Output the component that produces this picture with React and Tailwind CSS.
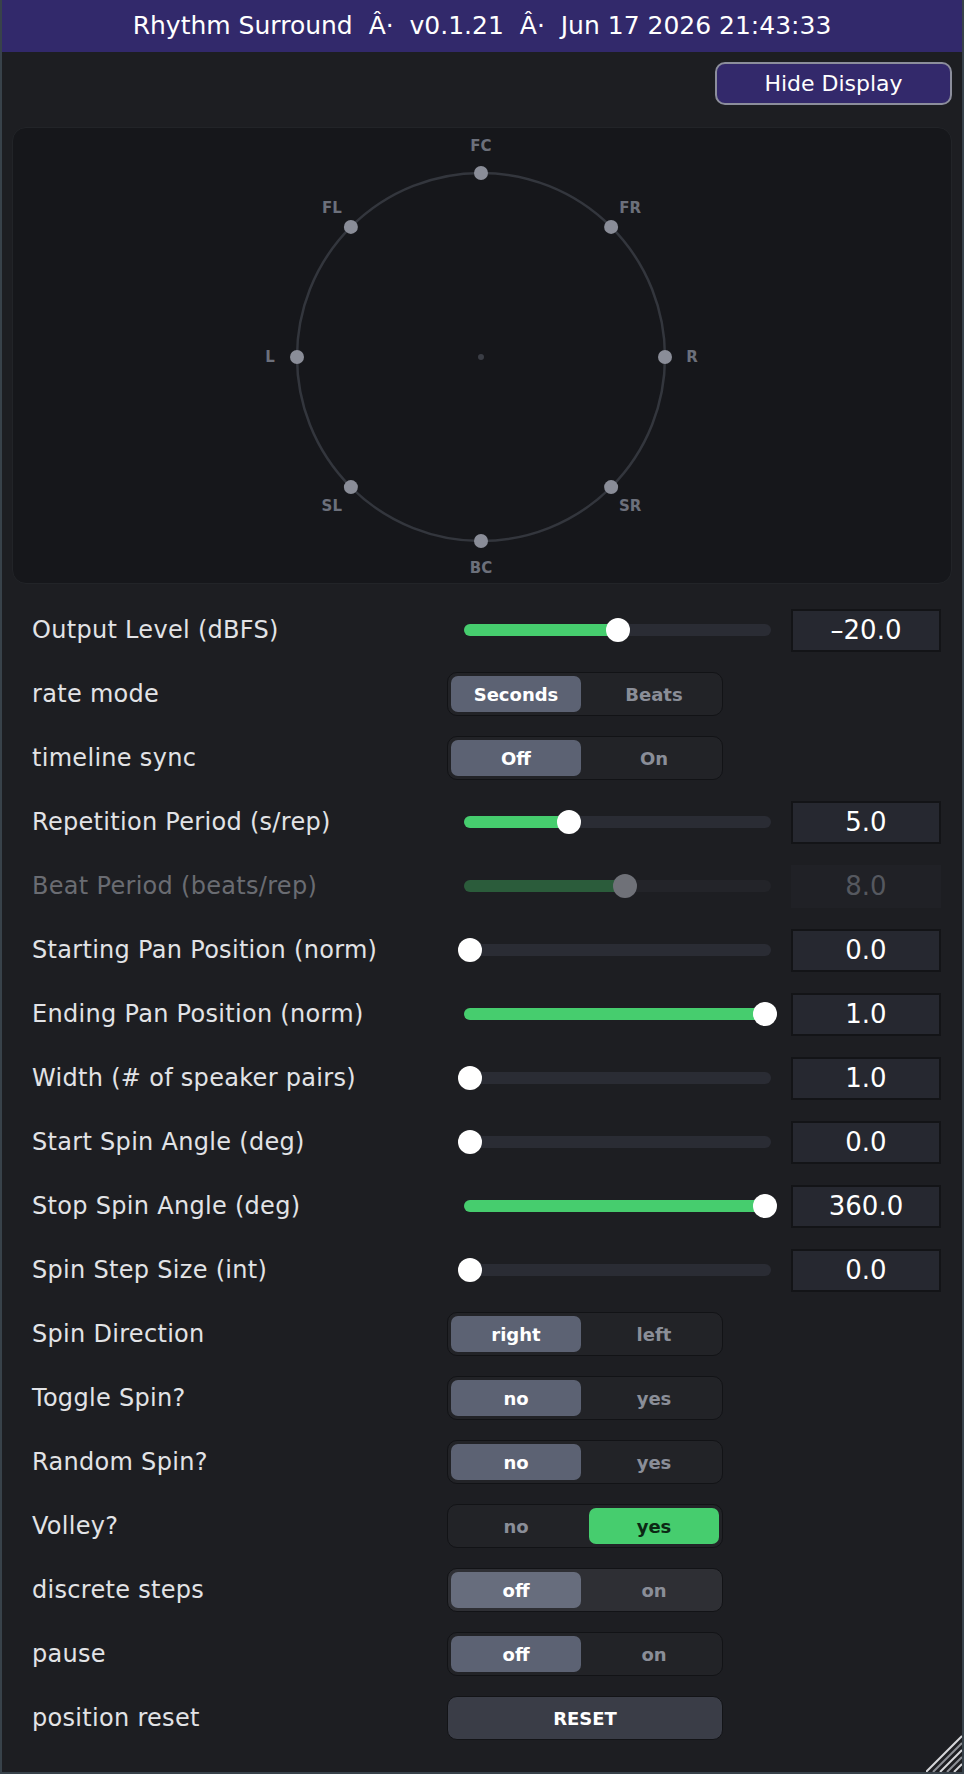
import React from "react";

const FONT = { fontFamily: '"DejaVu Sans", "Noto Sans", "Liberation Sans", sans-serif' };

// speaker layout on the ring, angle in degrees clockwise from front
const speakers = [
  { name: "FC", angle: 0 },
  { name: "FR", angle: 45 },
  { name: "R", angle: 90 },
  { name: "SR", angle: 135 },
  { name: "BC", angle: 180 },
  { name: "SL", angle: 225 },
  { name: "L", angle: 270 },
  { name: "FL", angle: 315 },
];

const rows = [
  { type: "slider", label: "Output Level (dBFS)", value: "–20.0", pos: 0.5 },
  { type: "seg", label: "rate mode", options: ["Seconds", "Beats"], active: 0 },
  { type: "seg", label: "timeline sync", options: ["Off", "On"], active: 0 },
  { type: "slider", label: "Repetition Period (s/rep)", value: "5.0", pos: 0.334 },
  { type: "slider", label: "Beat Period (beats/rep)", value: "8.0", pos: 0.524, disabled: true },
  { type: "slider", label: "Starting Pan Position (norm)", value: "0.0", pos: 0 },
  { type: "slider", label: "Ending Pan Position (norm)", value: "1.0", pos: 1 },
  { type: "slider", label: "Width (# of speaker pairs)", value: "1.0", pos: 0 },
  { type: "slider", label: "Start Spin Angle (deg)", value: "0.0", pos: 0 },
  { type: "slider", label: "Stop Spin Angle (deg)", value: "360.0", pos: 1 },
  { type: "slider", label: "Spin Step Size (int)", value: "0.0", pos: 0 },
  { type: "seg", label: "Spin Direction", options: ["right", "left"], active: 0 },
  { type: "seg", label: "Toggle Spin?", options: ["no", "yes"], active: 0 },
  { type: "seg", label: "Random Spin?", options: ["no", "yes"], active: 0 },
  { type: "seg", label: "Volley?", options: ["no", "yes"], active: 1, green: true },
  { type: "seg", label: "discrete steps", options: ["off", "on"], active: 0, hover: true },
  { type: "seg", label: "pause", options: ["off", "on"], active: 0 },
  { type: "button", label: "position reset", text: "RESET" },
];

function SpeakerDisplay() {
  const cx = 468;
  const cy = 229;
  const r = 184;
  const lr = 211;
  return (
    <svg width="934" height="455" viewBox="0 0 934 455" className="block">
      <circle cx={cx} cy={cy} r={r} fill="none" stroke="#33363d" strokeWidth="2.5" />
      <circle cx={cx} cy={cy} r="3" fill="#3a3d45" />
      {speakers.map((s) => {
        const a = (s.angle * Math.PI) / 180;
        const x = cx + r * Math.sin(a);
        const y = cy - r * Math.cos(a);
        const tx = cx + lr * Math.sin(a);
        const ty = cy - lr * Math.cos(a);
        return (
          <g key={s.name}>
            <circle cx={x} cy={y} r="7" fill="#8a8d98" />
            <text
              x={tx}
              y={ty}
              fill="#6c707b"
              fontSize="15"
              fontWeight="700"
              textAnchor="middle"
              dominantBaseline="central"
              style={FONT}
            >
              {s.name}
            </text>
          </g>
        );
      })}
    </svg>
  );
}

function Slider({ pos, value, disabled }) {
  const fill = 6 + pos * 295;
  return (
    <>
      <div className={`relative ml-[17px] h-3 w-[307px] rounded-full ${disabled ? "bg-[#232429]" : "bg-[#2a2c34]"}`}>
        <div
          className={`absolute left-0 top-0 h-3 rounded-full ${disabled ? "bg-[#2b5c3b]" : "bg-[#46cd6e]"}`}
          style={{ width: pos > 0 ? fill : 0 }}
        />
        <div
          className={`absolute top-[-6px] h-6 w-6 rounded-full ${disabled ? "bg-[#6f7178]" : "bg-white"}`}
          style={{ left: fill - 12 }}
        />
      </div>
      <div
        className={`ml-[20px] flex h-[43px] w-[150px] items-center justify-center text-[26px] ${
          disabled
            ? "bg-[#202126] text-[#55585f]"
            : "border-2 border-[#131417] bg-[#262830] text-white"
        }`}
      >
        {value}
      </div>
    </>
  );
}

function Segmented({ options, active, green, hover }) {
  return (
    <div
      className={`flex h-11 w-[276px] gap-2 rounded-[10px] border border-[#121316] p-[3px] ${
        hover ? "bg-[#2e2f34]" : "bg-[#222327]"
      }`}
    >
      {options.map((o, i) => {
        const on = i === active;
        let cls = "text-[#8a8e98]";
        if (on) cls = green ? "bg-[#46cd6e] text-[#0c2814]" : hover ? "bg-[#676d7d] text-white" : "bg-[#5c6273] text-white";
        return (
          <div
            key={o}
            className={`flex flex-1 items-center justify-center rounded-[7px] text-[18px] font-bold ${cls}`}
          >
            {o}
          </div>
        );
      })}
    </div>
  );
}

export default function App() {
  return (
    <div
      className="relative flex min-h-[1774px] w-[964px] flex-col border-x-2 border-b-2 border-[#38424a] bg-[#1d1e22]"
      style={FONT}
    >
      {/* title bar */}
      <div className="flex h-[52px] items-center justify-center bg-[#32296b] text-[25px] whitespace-pre text-white">
        Rhythm Surround  Â·  v0.1.21  Â·  Jun 17 2026 21:43:33
      </div>

      <div className="mt-[10px] flex justify-end pr-[10px]">
        <button className="flex h-[43px] w-[237px] items-center justify-center rounded-[10px] border-2 border-[#8c8e9c] bg-[#33296b] text-[22px] text-white">
          Hide Display
        </button>
      </div>

      {/* speaker display */}
      <div className="mx-[10px] mt-[22px] h-[457px] overflow-hidden rounded-[14px] border border-[#222428] bg-[#16171b]">
        <SpeakerDisplay />
      </div>

      {/* parameter rows */}
      <div className="mt-6 flex flex-col gap-5 pb-8 pl-[30px]">
        {rows.map((row) => (
          <div key={row.label} className="flex h-11 items-center">
            <div
              className={`w-[415px] text-[24px] tracking-[0.3px] ${row.disabled ? "text-[#6a6c72]" : "text-[#e2e3e6]"}`}
            >
              {row.label}
            </div>
            {row.type === "slider" && <Slider pos={row.pos} value={row.value} disabled={row.disabled} />}
            {row.type === "seg" && (
              <Segmented options={row.options} active={row.active} green={row.green} hover={row.hover} />
            )}
            {row.type === "button" && (
              <button className="flex h-11 w-[276px] items-center justify-center rounded-[10px] border border-[#131417] bg-[#3a3d47] text-[18px] font-bold text-white">
                {row.text}
              </button>
            )}
          </div>
        ))}
      </div>

      {/* resize grip */}
      <svg width="36" height="38" viewBox="0 0 36 38" className="absolute bottom-0 right-0">
        {[0, 7, 14, 21, 28].map((o, i) => (
          <line
            key={o}
            x1={o}
            y1="38"
            x2="36"
            y2={o + 2}
            stroke={i % 2 ? "#8e9096" : "#d6d7da"}
            strokeWidth="2"
          />
        ))}
      </svg>
    </div>
  );
}
